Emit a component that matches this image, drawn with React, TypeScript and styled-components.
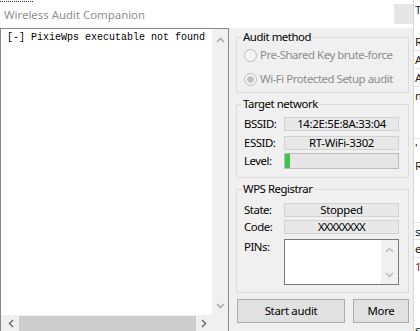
import React from "react";
import styled, { createGlobalStyle } from "styled-components";

const Global = createGlobalStyle`
  html, body { margin: 0; padding: 0; background: #ffffff; }
  body { font-family: "Noto Sans", "Segoe UI", sans-serif; }
  * { box-sizing: border-box; }
`;

const Screen = styled.div`
  width: 420px;
  height: 331px;
  overflow: hidden;
  display: flex;
  background: #ffffff;
`;

const Window = styled.div`
  width: 414px;
  flex: none;
  display: flex;
  flex-direction: column;
  border-right: 1px solid #d8d8d8;
`;

const TitleBar = styled.div`
  height: 28px;
  flex: none;
  display: flex;
  align-items: center;
  justify-content: space-between;
  background: #ffffff;
  position: relative;
  padding-left: 4px;
`;

const FocusDots = styled.div`
  position: absolute;
  left: 0;
  top: 1px;
  width: 33px;
  border-top: 1px dotted #303030;
`;

const Title = styled.span`
  font-size: 11.4px;
  color: #8f8f8f;
  margin-top: 1px;
`;

const CloseBox = styled.div`
  width: 19px;
  height: 20px;
  background: #e6e6e6;
`;

const Body = styled.div`
  flex: 1;
  display: flex;
  background: #f0f0f0;
  min-height: 0;
`;

const LogBox = styled.div`
  width: 229px;
  height: 305px;
  flex: none;
  border: 1px solid #828790;
  background: #ffffff;
  display: grid;
  grid-template-columns: 1fr 16px;
  grid-template-rows: 1fr 17px;
`;

const LogText = styled.div`
  font-family: "Liberation Mono", "DejaVu Sans Mono", monospace;
  font-size: 10px;
  color: #000;
  padding: 3px 0 0 6px;
  white-space: pre;
  overflow: hidden;
`;

const VScroll = styled.div`
  background: #f0f0f0;
  display: flex;
  flex-direction: column;
  justify-content: space-between;
  align-items: center;
  padding: 7px 0 5px;
`;

const HScroll = styled.div`
  background: #f0f0f0;
  display: flex;
  align-items: center;
  gap: 3px;
  padding: 0 4px 0 6px;
`;

const Thumb = styled.div`
  flex: 1;
  height: 16px;
  background: #cdcdcd;
`;

const Corner = styled.div`
  background: #f0f0f0;
`;

const Panel = styled.div`
  flex: 1;
  display: flex;
  flex-direction: column;
  padding: 0 4px 0 7px;
  font-size: 11.4px;
  letter-spacing: -0.45px;
  line-height: 14px;
`;

const Group = styled.fieldset<{ $h: number; $mt: number }>`
  margin: ${(p) => p.$mt}px 0 0 0;
  height: ${(p) => p.$h}px;
  border: 1px solid #dcdcdc;
  padding: 0 0 0 7px;
  flex: none;
  display: flex;
  flex-direction: column;
  min-inline-size: 0;
`;

const Legend = styled.legend`
  color: #000;
  padding: 0 1px;
  margin-left: -2px;
  line-height: 14px;
  height: 14px;
`;

const RadioRow = styled.div<{ $mt: number }>`
  display: flex;
  align-items: center;
  gap: 3px;
  margin-top: ${(p) => p.$mt}px;
  color: #8d8d8d;
  height: 16px;
  white-space: nowrap;
`;

const FieldRow = styled.div<{ $mt: number }>`
  display: grid;
  grid-template-columns: 40px 115px;
  align-items: center;
  margin-top: ${(p) => p.$mt}px;
  color: #000;
  white-space: nowrap;
`;

const LabelTop = styled.span`
  align-self: start;
  margin-top: 1px;
`;

const Field = styled.div<{ $h?: number; $tight?: boolean }>`
  height: ${(p) => p.$h ?? 14}px;
  border: 1px solid #d2d2d2;
  background: #e8e8e8;
  display: flex;
  align-items: center;
  justify-content: center;
  letter-spacing: ${(p) => (p.$tight ? "-0.8px" : "-0.3px")};
  line-height: 12px;
`;

const Progress = styled.div`
  height: 16px;
  border: 1px solid #bcbcbc;
  background: #e6e6e6;
  display: flex;
`;

const Fill = styled.div`
  background: #3fc54a;
  height: 100%;
`;

const Pins = styled.div`
  height: 46px;
  border: 1px solid #7a7a7a;
  background: #ffffff;
  display: flex;
  justify-content: flex-end;
`;

const PinsScroll = styled.div`
  width: 17px;
  background: #f0f0f0;
  display: flex;
  flex-direction: column;
  justify-content: space-between;
  align-items: center;
  padding: 6px 0 5px;
`;

const Buttons = styled.div`
  display: flex;
  gap: 8px;
  margin-top: 6px;
  padding-left: 1px;
`;

const Button = styled.div<{ $w: number }>`
  width: ${(p) => p.$w}px;
  height: 24px;
  background: #e1e1e1;
  border: 1px solid #adadad;
  display: flex;
  align-items: center;
  justify-content: center;
  color: #000;
  letter-spacing: -0.3px;
`;

const Strip = styled.div`
  flex: 1;
  display: flex;
  flex-direction: column;
  overflow: hidden;
  background: #ffffff;
`;

const StripRow = styled.div<{ $h: number; $c?: string; $line?: boolean }>`
  height: ${(p) => p.$h}px;
  flex: none;
  font-size: 11.4px;
  line-height: ${(p) => p.$h}px;
  color: ${(p) => p.$c ?? "#202020"};
  white-space: pre;
  padding-left: 1px;
  border-bottom: ${(p) => (p.$line ? "1px solid #e4e4e4" : "none")};
`;

const Arrow = ({ dir, color = "#a3a3a3" }: { dir: "up" | "down" | "left" | "right"; color?: string }) => {
  const paths: Record<string, string> = {
    up: "M1 6 L4.5 2.5 L8 6",
    down: "M1 3 L4.5 6.5 L8 3",
    left: "M6 1 L2.5 4.5 L6 8",
    right: "M3 1 L6.5 4.5 L3 8",
  };
  return (
    <svg width="9" height="9" viewBox="0 0 9 9">
      <path d={paths[dir]} fill="none" stroke={color} strokeWidth="1.3" />
    </svg>
  );
};

const Radio = ({ checked }: { checked?: boolean }) => (
  <svg width="13" height="13" viewBox="0 0 13 13">
    <circle cx="6.5" cy="6.5" r="6" fill="#f4f4f4" stroke="#bcbcbc" strokeWidth="1" />
    {checked && <circle cx="6.5" cy="6.5" r="3.3" fill="#c0c0c0" />}
  </svg>
);

const stripRows: { h: number; t: string; c?: string; line?: boolean }[] = [
  { h: 20, t: "T" },
  { h: 12, t: "" },
  { h: 19, t: "R", line: true },
  { h: 18, t: "A", line: true },
  { h: 18, t: "A", line: true },
  { h: 18, t: "m" },
  { h: 34, t: "", line: true },
  { h: 18, t: "'" },
  { h: 18, t: "R" },
  { h: 48, t: "", line: true },
  { h: 17, t: "s", line: true },
  { h: 18, t: "e", line: true },
  { h: 18, t: "1", c: "#8a1a1a" },
  { h: 45, t: "" },
  { h: 18, t: "s" },
];

export default function App() {
  return (
    <>
      <Global />
      <Screen>
        <Window>
          <TitleBar>
            <FocusDots />
            <Title>Wireless Audit Companion</Title>
            <CloseBox />
          </TitleBar>
          <Body>
            <LogBox>
              <LogText>[-] PixieWps executable not found</LogText>
              <VScroll>
                <Arrow dir="up" />
                <Arrow dir="down" />
              </VScroll>
              <HScroll>
                <Arrow dir="left" color="#606060" />
                <Thumb />
                <Arrow dir="right" color="#606060" />
              </HScroll>
              <Corner />
            </LogBox>
            <Panel>
              <Group $h={63} $mt={2}>
                <Legend>Audit method</Legend>
                <RadioRow $mt={3}>
                  <Radio />
                  Pre-Shared Key brute-force
                </RadioRow>
                <RadioRow $mt={8}>
                  <Radio checked />
                  Wi-Fi Protected Setup audit
                </RadioRow>
              </Group>
              <Group $h={81} $mt={4}>
                <Legend>Target network</Legend>
                <FieldRow $mt={6}>
                  <span>BSSID:</span>
                  <Field>14:2E:5E:8A:33:04</Field>
                </FieldRow>
                <FieldRow $mt={5}>
                  <span>ESSID:</span>
                  <Field>RT-WiFi-3302</Field>
                </FieldRow>
                <FieldRow $mt={3}>
                  <span>Level:</span>
                  <Progress>
                    <Fill style={{ width: "5px" }} />
                  </Progress>
                </FieldRow>
              </Group>
              <Group $h={111} $mt={4}>
                <Legend>WPS Registrar</Legend>
                <FieldRow $mt={7}>
                  <span>State:</span>
                  <Field>Stopped</Field>
                </FieldRow>
                <FieldRow $mt={3}>
                  <span>Code:</span>
                  <Field $tight>XXXXXXXX</Field>
                </FieldRow>
                <FieldRow $mt={5}>
                  <LabelTop>PINs:</LabelTop>
                  <Pins>
                    <PinsScroll>
                      <Arrow dir="up" color="#b8b8b8" />
                      <Arrow dir="down" color="#b8b8b8" />
                    </PinsScroll>
                  </Pins>
                </FieldRow>
              </Group>
              <Buttons>
                <Button $w={108}>Start audit</Button>
                <Button $w={56}>More</Button>
              </Buttons>
            </Panel>
          </Body>
        </Window>
        <Strip>
          {stripRows.map((r, i) => (
            <StripRow key={i} $h={r.h} $c={r.c} $line={r.line}>
              {r.t}
            </StripRow>
          ))}
        </Strip>
      </Screen>
    </>
  );
}
